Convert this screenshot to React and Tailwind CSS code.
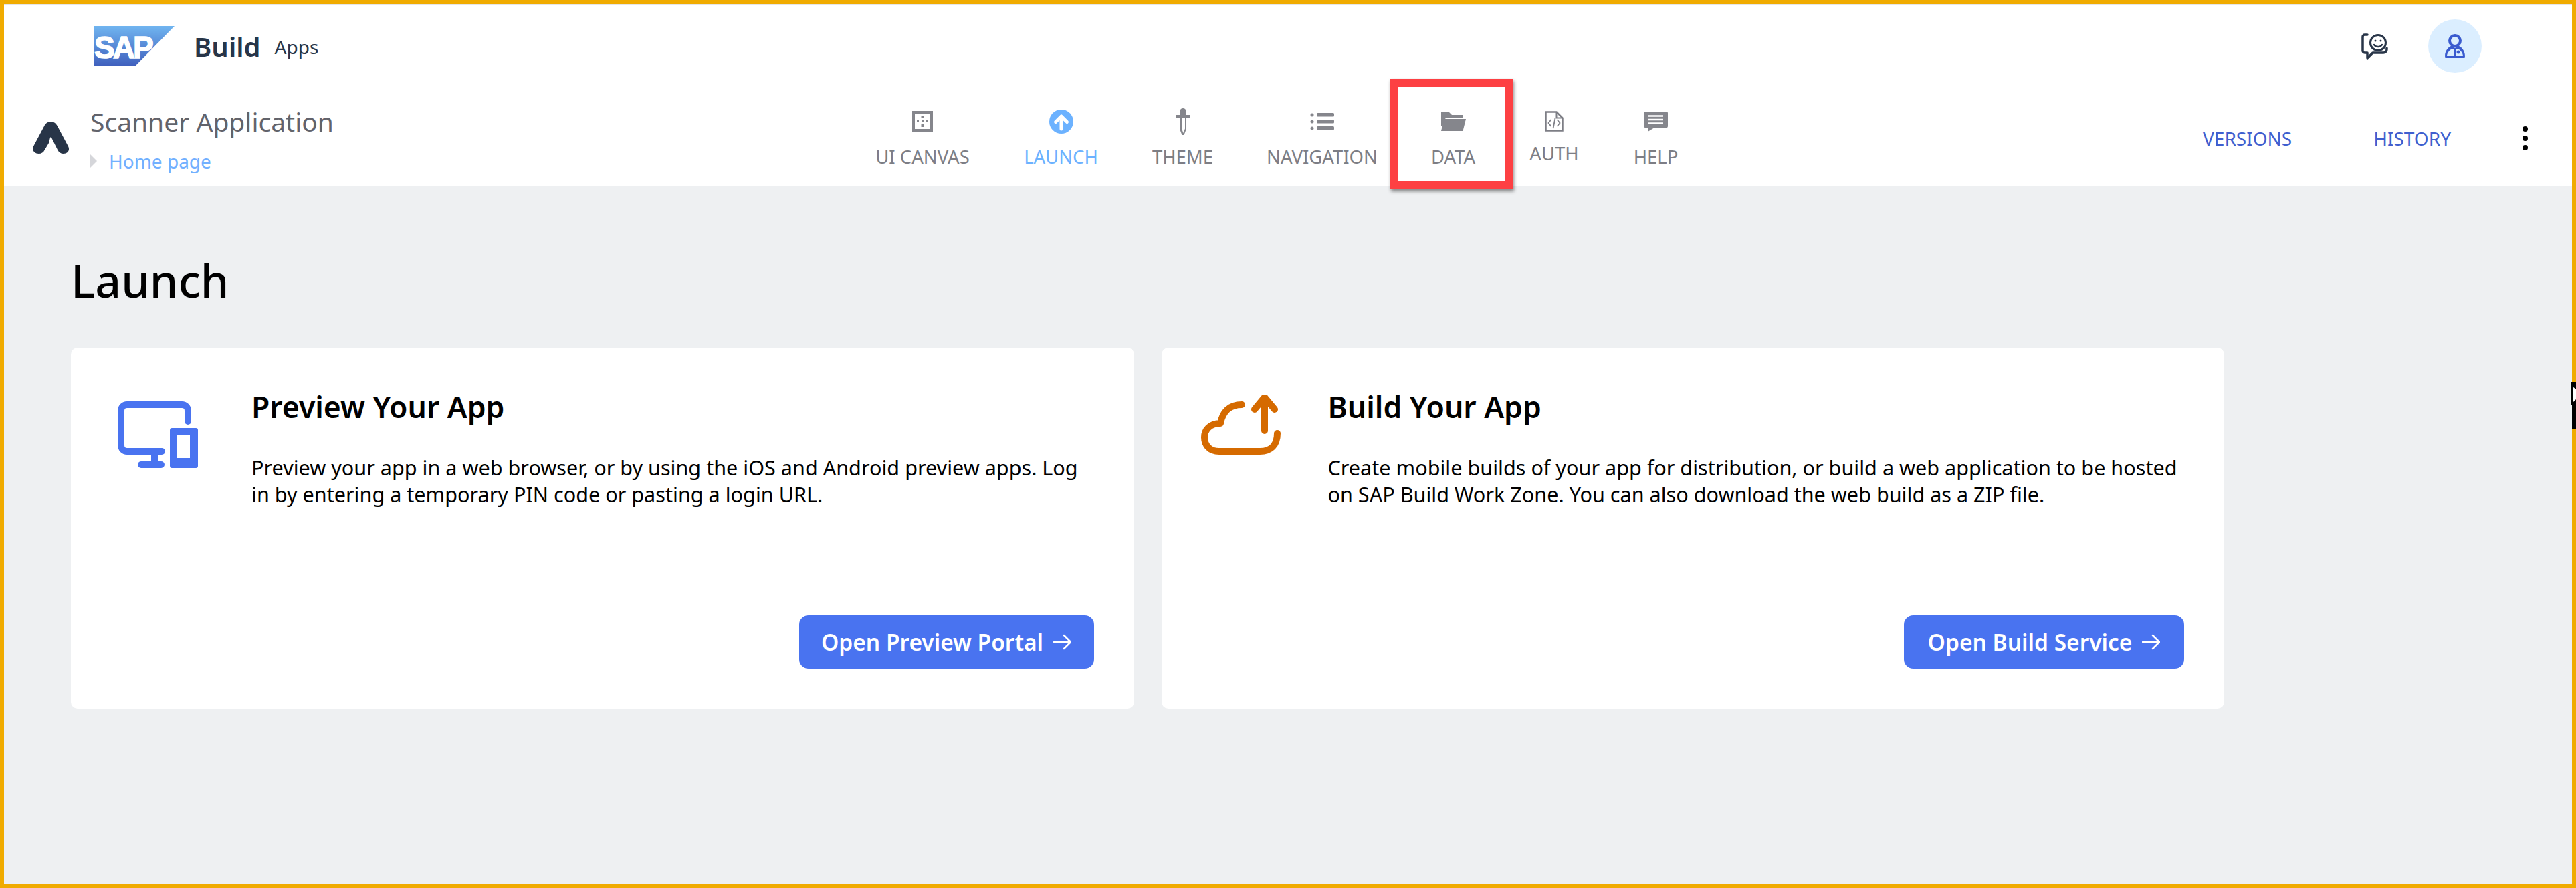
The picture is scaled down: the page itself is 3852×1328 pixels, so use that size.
import React from 'react';

const navItems = [
  { label: 'UI CANVAS', w: 'w-[141px]', icon: <CanvasIcon /> },
  { label: 'LAUNCH', w: 'w-[109px]', active: true, icon: <LaunchIcon /> },
  { label: 'THEME', w: 'w-[91px]', icon: <ThemeIcon /> },
  { label: 'NAVIGATION', w: 'w-[162px]', icon: <ListIcon /> },
  { label: 'DATA', w: 'w-[66px]', icon: <FolderIcon /> },
  { label: 'AUTH', w: 'w-[72px]', raised: true, icon: <AuthIcon /> },
  { label: 'HELP', w: 'w-[68px]', icon: <HelpIcon /> },
];

function CanvasIcon() {
  return (
    <svg width="31" height="31" viewBox="0 0 31 31" fill="#85868c">
      <path fillRule="evenodd" d="M0 0h31v31H0zM4 4v23h23V4z" />
      <rect x="13.5" y="7" width="4" height="4" />
      <rect x="7" y="14" width="3" height="3" />
      <rect x="14" y="14" width="3" height="3" />
      <rect x="21" y="14" width="3" height="3" />
      <rect x="13.5" y="20" width="4" height="4" />
    </svg>
  );
}

function LaunchIcon() {
  return (
    <svg width="36" height="36" viewBox="0 0 36 36">
      <circle cx="18" cy="18" r="18" fill="#6cb2ff" />
      <path d="M18 29V11M9.5 18.5 18 10l8.5 8.5" fill="none" stroke="#fff" strokeWidth="5" strokeLinecap="round" strokeLinejoin="round" />
    </svg>
  );
}

function ThemeIcon() {
  return (
    <svg width="20" height="40" viewBox="0 0 20 40" fill="#85868c">
      <path d="M5 5a5 5 0 0 1 10 0v5h5v5H0v-5h5z" />
      <path d="M5 15v16l3.5 9h3l3.5-9V15h-2v15.500l-2.500 6.500-2.500-6.500V15z" />
    </svg>
  );
}

function ListIcon() {
  return (
    <svg width="36" height="26" viewBox="0 0 36 26" fill="#85868c">
      <circle cx="3" cy="3" r="2.500" />
      <circle cx="3" cy="13" r="2.500" />
      <circle cx="3" cy="23" r="2.500" />
      <rect x="10" y="0" width="26" height="5.500" rx="1.500" />
      <rect x="10" y="10" width="26" height="5.500" rx="1.500" />
      <rect x="10" y="20" width="26" height="5.500" rx="1.500" />
    </svg>
  );
}

function FolderIcon() {
  return (
    <svg width="37" height="28" viewBox="0 0 37 28" fill="#85868c">
      <path d="M0 0h12l4 4h16v4H7L2 21H0z" />
      <path d="M0 28 4.500 10H37l-4.500 18z" />
    </svg>
  );
}

function AuthIcon() {
  return (
    <svg width="28" height="31" viewBox="0 0 28 31" fill="none" stroke="#7d7e85" strokeWidth="2.500">
      <path d="M1.500 1.500h16l9 9v19h-25z" />
      <path d="M17.500 1.500v9h9" strokeWidth="2" />
      <path d="M9.500 13 5.500 18l4 5M18.500 13l4 5-4 5M15.500 11l-3 15" strokeWidth="1.800" />
    </svg>
  );
}

function HelpIcon() {
  return (
    <svg width="36" height="30" viewBox="0 0 36 30">
      <path d="M2 0h32a2 2 0 0 1 2 2v20a2 2 0 0 1-2 2H16L6 30v-6H2a2 2 0 0 1-2-2V2a2 2 0 0 1 2-2z" fill="#85868c" />
      <path d="M7 6.500h22M7 12h22M7 17.500h22" stroke="#fff" strokeWidth="2.500" />
    </svg>
  );
}

function SapLogo() {
  return (
    <svg width="120" height="60" viewBox="0 0 120 60">
      <defs>
        <linearGradient id="sapGrad" x1="0" y1="0" x2="0" y2="1">
          <stop offset="0" stopColor="#70b5f0" />
          <stop offset="1" stopColor="#3f5fbd" />
        </linearGradient>
      </defs>
      <path d="M0 0h120L61 60H0z" fill="url(#sapGrad)" />
      <text x="0" y="48" fontFamily="Liberation Sans" fontWeight="700" fontSize="46" letterSpacing="-3" fill="#fff" stroke="#fff" strokeWidth="1.500">SAP</text>
    </svg>
  );
}

function BuildMark() {
  return (
    <svg width="56" height="48" viewBox="0 0 56 48" fill="#283548">
      <path d="M28 0c5 0 8 3 10 7l16 30c3 6-1 11-7 11-4 0-7-2-9-6L29 24c-.5-1-1.500-1-2 0l-2 8-6 10c-2 4-5 6-9 6-6 0-11-5-8-11L18 7c2-4 5-7 10-7z" />
    </svg>
  );
}

function ChatIcon() {
  return (
    <svg width="40" height="40" viewBox="0 0 40 40" fill="none" stroke="#283548">
      <path d="M9 3H5a3 3 0 0 0-3 3v21a3 3 0 0 0 3 3h4v8l8-8h16a5 5 0 0 0 5-5v-2" strokeWidth="3.500" strokeLinecap="round" strokeLinejoin="round" />
      <circle cx="25" cy="15" r="11.500" strokeWidth="3" />
      <circle cx="21" cy="12" r="1.500" fill="#283548" stroke="none" />
      <circle cx="29" cy="12" r="1.500" fill="#283548" stroke="none" />
      <path d="M19 18c3 4 9 4 12 0" strokeWidth="2.500" strokeLinecap="round" />
    </svg>
  );
}

function UserIcon() {
  return (
    <svg width="30" height="36" viewBox="0 0 30 36">
      <circle cx="15" cy="10" r="8" fill="none" stroke="#3a5bcf" strokeWidth="4" />
      <path fillRule="evenodd" d="M11 17 C5 19 0 25 0 33a3 3 0 0 0 3 3h24a3 3 0 0 0 3-3c0-8-5-14-11-16l-4 4zM13 23v10H3c0-4 3-8 6-10zM17 23l4 0c3 2 6 6 6 10H17z" fill="#3a5bcf" />
      <circle cx="20" cy="27" r="2.500" fill="#3a5bcf" />
    </svg>
  );
}

function DevicesIcon() {
  return (
    <svg width="120" height="100" viewBox="0 0 120 100" fill="#4973f0">
      <path d="M14 0h82a14 14 0 0 1 14 14v16a5 5 0 0 1-10 0V14a4 4 0 0 0-4-4H14a4 4 0 0 0-4 4v52a4 4 0 0 0 4 4h52a5 5 0 0 1 0 10H14A14 14 0 0 1 0 66V14A14 14 0 0 1 14 0z" />
      <rect x="50" y="80" width="10" height="12" />
      <rect x="30" y="90" width="40" height="10" rx="5" />
      <path fillRule="evenodd" d="M81 40h36a3 3 0 0 1 3 3v54a3 3 0 0 1-3 3H81a3 3 0 0 1-3-3V43a3 3 0 0 1 3-3zm7 10v35h20V50z" />
    </svg>
  );
}

function CloudUpIcon() {
  return (
    <svg width="120" height="90" viewBox="0 0 120 90" fill="none" stroke="#d56a00" strokeWidth="10" strokeLinecap="round" strokeLinejoin="round">
      <path d="M61 15C42 15 32 26 29 43 13 43 5 53 5 64c0 12 8 21 22 21h61c16 0 26-9 26-27" />
      <path d="M95 54V5" />
      <path d="M80 22 95 4l15 18" />
    </svg>
  );
}

function ArrowIcon() {
  return (
    <svg width="27" height="24" viewBox="0 0 27 24" fill="none" stroke="#fff" strokeWidth="2.500" strokeLinecap="round" strokeLinejoin="round">
      <path d="M1 12h25M16 2l10 10-10 10" />
    </svg>
  );
}

function NavItem({ item }) {
  const color = item.active ? 'text-[#6cb2ff]' : 'text-[#7d7e85]';
  return (
    <div className={`flex flex-col items-center ${item.w}`}>
      <div className="h-[45px] flex items-center justify-center">{item.icon}</div>
      <span className={`${item.raised ? 'mt-[8px]' : 'mt-[13px]'} text-[27.5px] leading-[36px] whitespace-nowrap ${color}`}>{item.label}</span>
    </div>
  );
}

function Card({ icon, title, lines, button, iconClass, textLeft, btnW }) {
  return (
    <div className="relative flex-1 h-[540px] bg-white rounded-[10px]">
      <div className="flex h-full">
        <div className={`w-[70px] ${iconClass}`}>{icon}</div>
        <div className={`${textLeft} pt-[60px]`}>
          <h2 className="text-[44.5px] leading-[56px] font-semibold text-black">{title}</h2>
          <div className="mt-[43px] text-[30.6px] leading-[40px] text-black">
            {lines.map((l) => (
              <p key={l} className="whitespace-nowrap">{l}</p>
            ))}
          </div>
        </div>
      </div>
      <button className={`absolute right-[60px] bottom-[60px] h-[80px] ${btnW} rounded-[14px] bg-[#4973f0] text-white text-[33.5px] font-semibold flex items-center justify-center gap-[15px]`}>
        {button}
        <ArrowIcon />
      </button>
    </div>
  );
}

export default function App() {
  return (
    <div className="relative w-full h-[1328px] border-[6px] border-[#f0ab00] bg-[#eef0f2] font-['Noto_Sans',sans-serif]">
      <div className="h-[2px] bg-[#e4e5e7]" />
      <header className="h-[270px] bg-white flex flex-col">
        <div className="h-[115px] flex items-center pl-[135px] pr-[135px] pt-[6px]">
          <SapLogo />
          <span className="ml-[29px] mt-[3px] text-[40px] font-semibold text-[#283548]">Build</span>
          <span className="ml-[21px] mt-[3px] text-[28px] text-[#283548]">Apps</span>
          <div className="ml-auto flex items-center gap-[60px]">
            <ChatIcon />
            <div className="w-[80px] h-[80px] rounded-full bg-[#dbeeff] flex items-center justify-center">
              <UserIcon />
            </div>
          </div>
        </div>
        <div className="relative flex-1 flex">
          <div className="w-[1303px] flex items-start pl-[42px] pt-[33px]">
            <div className="mt-[26px]">
              <BuildMark />
            </div>
            <div className="ml-[31px]">
              <div className="text-[39px] leading-[52px] text-[#62636b]">Scanner Application</div>
              <div className="flex items-center mt-[15px]">
                <span className="w-0 h-0 border-y-[10px] border-y-transparent border-l-[10px] border-l-[#d5d6da]" />
                <span className="ml-[18px] text-[28px] leading-[36px] text-[#72b0ff]">Home page</span>
              </div>
            </div>
          </div>
          <nav className="flex items-start gap-[82px] pt-[36px]">
            {navItems.map((item) => (
              <NavItem key={item.label} item={item} />
            ))}
          </nav>
          <div className="ml-auto flex items-center h-fit pt-[65px] pr-[66px] text-[28px] leading-[38px] text-[#3f5fcf]">
            <span>VERSIONS</span>
            <span className="ml-[122px]">HISTORY</span>
            <span className="ml-[107px] flex flex-col gap-[6px]">
              <i className="block w-[8px] h-[8px] rounded-full bg-black" />
              <i className="block w-[8px] h-[8px] rounded-full bg-black" />
              <i className="block w-[8px] h-[8px] rounded-full bg-black" />
            </span>
          </div>
        </div>
      </header>
      <main className="pl-[100px]">
        <h1 className="mt-[96px] text-[68px] leading-[90px] font-medium text-black">Launch</h1>
        <div className="mt-[56px] flex gap-[41px] w-[3220px]">
          <Card
            icon={<DevicesIcon />}
            title="Preview Your App"
            lines={[
              'Preview your app in a web browser, or by using the iOS and Android preview apps. Log',
              'in by entering a temporary PIN code or pasting a login URL.',
            ]}
            button="Open Preview Portal"
            iconClass="ml-[70px] pt-[80px]"
            textLeft="ml-[130px]"
            btnW="w-[441px]"
          />
          <Card
            icon={<CloudUpIcon />}
            title="Build Your App"
            lines={[
              'Create mobile builds of your app for distribution, or build a web application to be hosted',
              'on SAP Build Work Zone. You can also download the web build as a ZIP file.',
            ]}
            button="Open Build Service"
            iconClass="ml-[59px] pt-[70px]"
            textLeft="ml-[120px]"
            btnW="w-[419px]"
          />
        </div>
      </main>
      {/* red callout round the DATA tab */}
      <div className="absolute left-[2072px] top-[112px] w-[184px] h-[165px] border-[12px] border-[#fd4043] shadow-[2px_3px_5px_rgba(0,0,0,0.45)]" />
      {/* mouse cursor caught at the window edge */}
      <svg className="absolute right-[-6px] top-[566px]" width="7" height="69" viewBox="0 0 7 69">
        <path d="M0 0h7v69H1V34H0z" fill="#000" />
        <path d="M2 6l5 4v15l-5 5z" fill="#fff" />
      </svg>
    </div>
  );
}
